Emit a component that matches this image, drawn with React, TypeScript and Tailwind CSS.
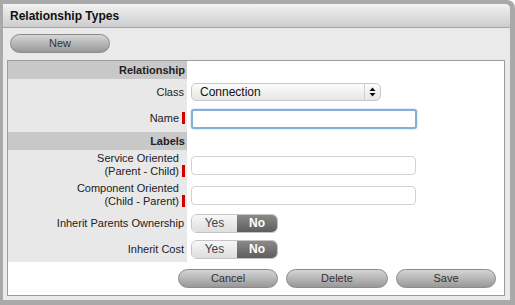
const RequiredMark = () => <span className="mb-[1px] ml-[3px] inline-block h-[12px] w-[3px] shrink-0 bg-[#d40000]" />;

const Toggle = () => (
  <div className="flex h-[19px] w-[87px] overflow-hidden rounded-[6px] border border-[#c4c4c4] text-[12px]">
    <div className="flex w-[45px] items-center justify-center bg-gradient-to-b from-[#f7f7f7] to-[#dedede] text-[#444]">
      Yes
    </div>
    <div className="flex flex-1 items-center justify-center bg-gradient-to-b from-[#8a8a8a] to-[#5e5e5e] font-bold text-white">
      No
    </div>
  </div>
);

const GrayButton = ({ label, width }: { label: string; width: string }) => (
  <button
    className={`${width} block h-[19px] rounded-full border border-[#8a8a8a] bg-gradient-to-b from-[#d6d6d6] to-[#989898] text-[11px] text-[#333]`}
  >
    {label}
  </button>
);

const SectionHeader = ({ title }: { title: string }) => (
  <div className="flex h-[18px]">
    <div className="flex w-[179px] items-center justify-end bg-[#c8c8c8] pr-[2px] text-[11px] font-bold text-[#222]">
      {title}
    </div>
    <div className="flex-1 bg-white" />
  </div>
);

const Row = ({
  label,
  required,
  height,
  children,
}: {
  label: React.ReactNode;
  required?: boolean;
  height: string;
  children: React.ReactNode;
}) => (
  <div className={`flex ${height}`}>
    <div className="flex w-[179px] items-center justify-end bg-[#e8e8e8] pr-[2px] text-right text-[11px] leading-[13px] text-[#222]">
      <div className="flex items-end">
        <div>{label}</div>
        {required ? <RequiredMark /> : <span className="w-[1px]" />}
      </div>
    </div>
    <div className="flex flex-1 items-center bg-white pl-[4px]">{children}</div>
  </div>
);

export default function App() {
  return (
    <div
      className="h-[305px] w-[515px] rounded-tr-[8px] bg-[#a9a9a9] pb-[5px] pl-[3px] pr-[5px] pt-[4px]"
      style={{ fontFamily: '"Liberation Sans", Arial, sans-serif' }}
    >
      <div className="flex h-full flex-col overflow-hidden rounded-tr-[5px] bg-[#eaeaea]">
        <div className="flex h-[24px] shrink-0 items-center border-b border-[#a4a4a4] bg-gradient-to-b from-[#f2f2f2] to-[#cdcdcd] pl-[7px] text-[12px] font-bold text-[#111]">
          Relationship Types
        </div>
        <div className="flex px-[7px] pt-[6px]">
          <GrayButton label="New" width="w-[100px]" />
        </div>
        <div className="mb-[4px] ml-[4px] mr-[5px] mt-[7px] flex flex-1 flex-col border border-[#9c9c9c] bg-white">
          <SectionHeader title="Relationship" />
          <Row label="Class" height="h-[26px]">
            <div className="flex h-[18px] w-[190px] items-center rounded-[5px] border border-[#c8c8c8] bg-gradient-to-b from-[#fdfdfd] to-[#e6e6e6] text-[12px] text-[#111]">
              <span className="flex-1 pl-[8px]">Connection</span>
              <div className="flex h-full w-[16px] items-center justify-center border-l border-[#cfcfcf]">
                <svg width="7" height="10" viewBox="0 0 7 10">
                  <path d="M3.5 0.5 L6.5 4 H0.5 Z M3.5 9.5 L6.5 6 H0.5 Z" fill="#111" />
                </svg>
              </div>
            </div>
          </Row>
          <Row label="Name" required height="h-[27px]">
            <div className="h-[20px] w-[226px] rounded-[3px] border-2 border-[#86aedb] bg-white shadow-[0_0_2px_#9cc0e8]" />
          </Row>
          <SectionHeader title="Labels" />
          <Row
            label={
              <>
                Service Oriented
                <br />
                (Parent - Child)
              </>
            }
            required
            height="h-[30px]"
          >
            <div className="h-[19px] w-[225px] rounded-[4px] border border-[#d2d2d2] bg-white" />
          </Row>
          <Row
            label={
              <>
                Component Oriented
                <br />
                (Child - Parent)
              </>
            }
            required
            height="h-[30px]"
          >
            <div className="h-[19px] w-[225px] rounded-[4px] border border-[#d2d2d2] bg-white" />
          </Row>
          <Row label="Inherit Parents Ownership" height="h-[26px]">
            <Toggle />
          </Row>
          <Row label="Inherit Cost" height="h-[26px]">
            <Toggle />
          </Row>
          <div className="flex flex-1 items-center justify-end gap-[8px] pr-[8px]">
            <GrayButton label="Cancel" width="w-[100px]" />
            <GrayButton label="Delete" width="w-[102px]" />
            <GrayButton label="Save" width="w-[100px]" />
          </div>
        </div>
      </div>
    </div>
  );
}
